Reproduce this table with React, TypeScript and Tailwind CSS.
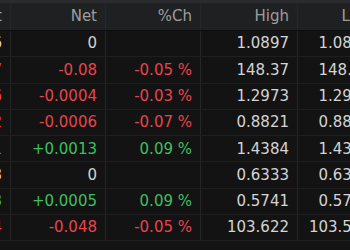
import React from 'react';
import { clsx } from 'clsx';

type Dir = 'up' | 'down' | 'flat';

interface Quote {
  last: string;
  net: string;
  pct: string;
  high: string;
  low: string;
  dir: Dir;
}

const quotes: Quote[] = [
  { last: '1.0886', net: '0', pct: '', high: '1.0897', low: '1.0861', dir: 'flat' },
  { last: '148.07', net: '-0.08', pct: '-0.05 %', high: '148.37', low: '148.02', dir: 'down' },
  { last: '1.2936', net: '-0.0004', pct: '-0.03 %', high: '1.2973', low: '1.2930', dir: 'down' },
  { last: '0.8812', net: '-0.0006', pct: '-0.07 %', high: '0.8821', low: '0.8809', dir: 'down' },
  { last: '1.4321', net: '+0.0013', pct: '0.09 %', high: '1.4384', low: '1.4302', dir: 'up' },
  { last: '0.6323', net: '0', pct: '', high: '0.6333', low: '0.6311', dir: 'flat' },
  { last: '0.5733', net: '+0.0005', pct: '0.09 %', high: '0.5741', low: '0.5722', dir: 'up' },
  { last: '103.594', net: '-0.048', pct: '-0.05 %', high: '103.622', low: '103.513', dir: 'down' },
];

const tone: Record<Dir, string> = {
  up: 'text-[#3fbf5f]',
  down: 'text-[#e8434d]',
  flat: 'text-[#d4d4d4]',
};

const lastTone: Record<Dir, string> = {
  up: 'text-[#3fbf5f]',
  down: 'text-[#e8434d]',
  flat: 'text-[#e0d6c8]',
};

function Cell({ children, className }: { children?: React.ReactNode; className?: string }) {
  return (
    <div
      className={clsx(
        'flex items-center justify-end overflow-hidden whitespace-nowrap pr-[8px] border-r border-[#262626]',
        className
      )}
    >
      {children}
    </div>
  );
}

export default function App() {
  return (
    <div
      className="w-[350px] h-[250px] overflow-hidden bg-[#131313] text-[15px]"
      style={{ fontFamily: '"DejaVu Sans", Verdana, sans-serif' }}
    >
      <div className="h-[3px] bg-[#2b2b2d]" />
      <div className="flex h-[28px] bg-[#1f2022] text-[#9d9d9d] border-b border-[#0c0c0c]">
        <Cell className="w-[11px] shrink-0 pr-[6px] border-[#0e0e0e]">Last</Cell>
        <Cell className="w-[95px] shrink-0 border-[#0e0e0e]">Net</Cell>
        <Cell className="w-[95px] shrink-0 border-[#0e0e0e]">%Ch</Cell>
        <Cell className="w-[97px] shrink-0 border-[#0e0e0e]">High</Cell>
        <Cell className="w-[82px] shrink-0 border-[#0e0e0e]">Low</Cell>
      </div>
      {quotes.map((q, i) => (
        <div key={i} className="flex h-[26.3px] border-b border-[#1f1f1f]">
          <Cell className={clsx('w-[11px] shrink-0 pr-[5px]', lastTone[q.dir])}>{q.last}</Cell>
          <Cell className={clsx('w-[95px] shrink-0', tone[q.dir])}>{q.net}</Cell>
          <Cell className={clsx('w-[95px] shrink-0', tone[q.dir])}>{q.pct}</Cell>
          <Cell className="w-[97px] shrink-0 text-[#d4d4d4]">{q.high}</Cell>
          <Cell className="w-[82px] shrink-0 text-[#d4d4d4]">{q.low}</Cell>
        </div>
      ))}
    </div>
  );
}
